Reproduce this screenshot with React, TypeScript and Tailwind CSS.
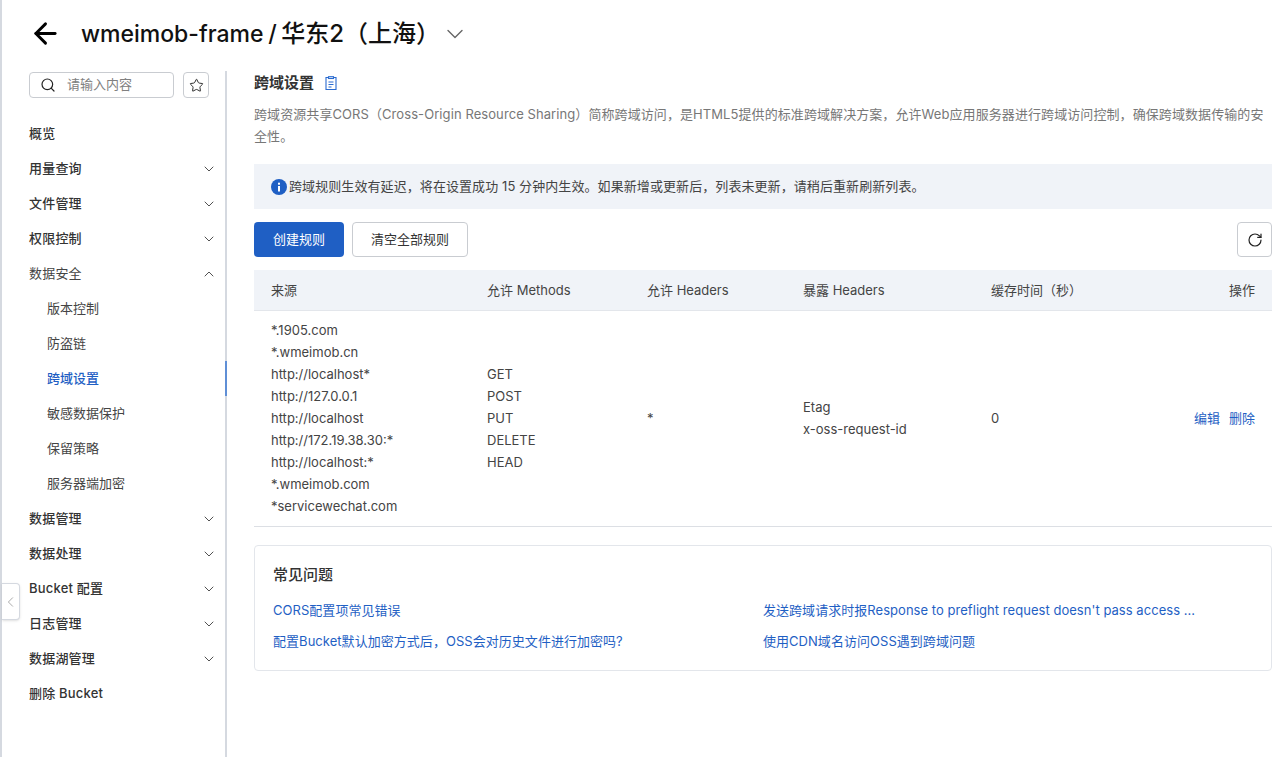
import { ArrowLeft, ChevronDown, ChevronLeft, ChevronUp, RotateCw, Search, Star } from 'lucide-react';

const font = 'font-["Inter","Noto_Sans_CJK_SC",sans-serif]';

type NavItem = { label: string; chevron?: 'down' | 'up'; sub?: boolean; active?: boolean };

const navItems: NavItem[] = [
  { label: '概览' },
  { label: '用量查询', chevron: 'down' },
  { label: '文件管理', chevron: 'down' },
  { label: '权限控制', chevron: 'down' },
  { label: '数据安全', chevron: 'up' },
  { label: '版本控制', sub: true },
  { label: '防盗链', sub: true },
  { label: '跨域设置', sub: true, active: true },
  { label: '敏感数据保护', sub: true },
  { label: '保留策略', sub: true },
  { label: '服务器端加密', sub: true },
  { label: '数据管理', chevron: 'down' },
  { label: '数据处理', chevron: 'down' },
  { label: 'Bucket 配置', chevron: 'down' },
  { label: '日志管理', chevron: 'down' },
  { label: '数据湖管理', chevron: 'down' },
  { label: '删除 Bucket' },
];

const origins = [
  '*.1905.com',
  '*.wmeimob.cn',
  'http://localhost*',
  'http://127.0.0.1',
  'http://localhost',
  'http://172.19.38.30:*',
  'http://localhost:*',
  '*.wmeimob.com',
  '*servicewechat.com',
];

function Sidebar() {
  return (
    <aside className="w-[225px] shrink-0 border-r-2 border-[#d5d9e0] pt-px">
      <div className="flex gap-[9px] pl-[27px]">
        <div className="flex h-[26px] w-[145px] items-center rounded-sm border border-[#c9ccd1] pl-[10px]">
          <Search size={16} strokeWidth={1.8} className="text-[#222]" />
          <span className="ml-[11px] text-[13px] text-[#808080]">请输入内容</span>
        </div>
        <div className="flex h-[26px] w-[26px] items-center justify-center rounded-sm border border-[#c9ccd1]">
          <Star size={15} strokeWidth={1.5} className="text-[#222]" />
        </div>
      </div>
      <nav className="mt-[18px]">
        {navItems.map((item) => (
          <div key={item.label} className="relative flex h-[35px] items-center justify-between pl-[27px] pr-[8px]">
            <span
              className={
                item.active
                  ? 'pl-[18px] text-[13px] font-medium text-[#1f5fc4]'
                  : item.sub
                    ? 'pl-[18px] text-[13px] text-[#444]'
                    : item.chevron === 'up'
                      ? 'text-[13px] tracking-[0.2px] text-[#444]'
                      : 'text-[13px] font-medium tracking-[0.2px] text-[#333]'
              }
            >
              {item.label}
            </span>
            {item.chevron === 'down' && <ChevronDown size={16} strokeWidth={1.4} className="text-[#444]" />}
            {item.chevron === 'up' && <ChevronUp size={16} strokeWidth={1.4} className="text-[#444]" />}
            {item.active && <div className="absolute right-[-2px] top-0 h-[35px] w-[2px] bg-[#5f8fd6]" />}
          </div>
        ))}
      </nav>
    </aside>
  );
}

function RulesTable() {
  return (
    <div className="mt-[13px] text-[13px] text-[#444]">
      <div className="flex h-[41px] items-center border-b border-[#e3e6eb] bg-[#f0f3f8] px-[17px] pt-px">
        <div className="w-[216px]">来源</div>
        <div className="w-[160px]">允许 Methods</div>
        <div className="w-[156px]">允许 Headers</div>
        <div className="w-[188px]">暴露 Headers</div>
        <div className="flex-1">缓存时间（秒）</div>
        <div>操作</div>
      </div>
      <div className="flex items-center border-b border-[#dcdfe4] px-[17px] pb-[9px] pt-[8px] leading-[22px]">
        <div className="w-[216px]">
          {origins.map((o) => (
            <div key={o}>{o}</div>
          ))}
        </div>
        <div className="w-[160px]">
          <div>GET</div>
          <div>POST</div>
          <div>PUT</div>
          <div>DELETE</div>
          <div>HEAD</div>
        </div>
        <div className="w-[156px]">*</div>
        <div className="w-[188px]">
          <div>Etag</div>
          <div>x-oss-request-id</div>
        </div>
        <div className="flex-1">0</div>
        <div className="flex gap-[9px] text-[#1f5fc4]">
          <span>编辑</span>
          <span>删除</span>
        </div>
      </div>
    </div>
  );
}

export default function App() {
  return (
    <div className={`${font} relative min-h-[757px] border-l-2 border-[#d5d9e0] bg-white`}>
      <header className="flex h-[71px] items-center pb-[4px] pl-[27px]">
        <ArrowLeft size={33} strokeWidth={2.1} className="text-black" />
        <h1 className="ml-[19px] text-[23px] font-medium text-[#111] [word-spacing:-1.5px]">
          wmeimob-frame / <span className="text-[24px]">华东2（上海）</span>
        </h1>
        <ChevronDown size={28} strokeWidth={1.2} className="ml-[1px] text-[#666]" />
      </header>

      <div className="flex min-h-[686px]">
        <Sidebar />
        <main className="min-w-0 flex-1 pl-[27px] pr-2">
          <div className="flex h-[24px] items-center">
            <h2 className="text-[15px] font-semibold text-[#333]">跨域设置</h2>
            <svg width="12" height="14" viewBox="0 0 12 14" fill="none" stroke="#2a6bd0" strokeWidth="1.1" className="ml-[11px]">
              <path d="M3.5 1.5H1v12h10v-12H8.500" />
              <rect x="3.500" y="0.700" width="5" height="1.800" />
              <path d="M3.500 6h5M3.500 8.500h5M3.500 11h3" />
            </svg>
          </div>
          <p className="mt-[8px] text-[13px] leading-[22px] tracking-[0.08px] text-[#777]">
            跨域资源共享CORS（Cross-Origin Resource Sharing）简称跨域访问，是HTML5提供的标准跨域解决方案，允许Web应用服务器进行跨域访问控制，确保跨域数据传输的安全性。
          </p>
          <div className="mt-[17px] flex h-[45px] items-center bg-[#f0f3f8] pl-[17px] text-[13px] tracking-[0.08px] text-[#444]">
            <svg width="16" height="16" viewBox="0 0 16 16" className="mr-[2px] shrink-0">
              <circle cx="8" cy="8" r="8" fill="#1f5fc4" />
              <rect x="7" y="7" width="2" height="5.500" fill="#fff" />
              <rect x="7" y="3.700" width="2" height="2" fill="#fff" />
            </svg>
            跨域规则生效有延迟，将在设置成功 15 分钟内生效。如果新增或更新后，列表未更新，请稍后重新刷新列表。
          </div>
          <div className="mt-[13px] flex items-center gap-[8px]">
            <button className="h-[35px] w-[90px] rounded-sm bg-[#1f5fc4] text-[13px] text-white">创建规则</button>
            <button className="h-[35px] w-[116px] rounded-sm border border-[#c9ccd1] text-[13px] text-[#333]">清空全部规则</button>
            <button className="ml-auto flex h-[35px] w-[35px] items-center justify-center rounded-sm border border-[#c9ccd1]">
              <RotateCw size={16} strokeWidth={1.8} className="text-[#222]" />
            </button>
          </div>
          <RulesTable />
          <section className="mt-[18px] h-[126px] rounded border border-[#e3e6eb] px-[18px] pt-[18px] text-[13px] tracking-[0.04px]">
            <h3 className="text-[15px] font-medium text-[#333]">常见问题</h3>
            <div className="mt-[12px] grid grid-cols-[490px_1fr] gap-y-[9px] leading-[22px] text-[#1f5fc4]">
              <div>CORS配置项常见错误</div>
              <div>发送跨域请求时报Response to preflight request doesn't pass access ...</div>
              <div>配置Bucket默认加密方式后，OSS会对历史文件进行加密吗?</div>
              <div>使用CDN域名访问OSS遇到跨域问题</div>
            </div>
          </section>
        </main>
      </div>

      <div className="absolute left-0 top-[583px] flex h-[37px] w-[18px] items-center justify-center rounded-r-sm border border-l-0 border-[#d5d9e0] bg-white shadow-sm">
        <ChevronLeft size={22} strokeWidth={1} className="text-[#888]" />
      </div>
    </div>
  );
}
